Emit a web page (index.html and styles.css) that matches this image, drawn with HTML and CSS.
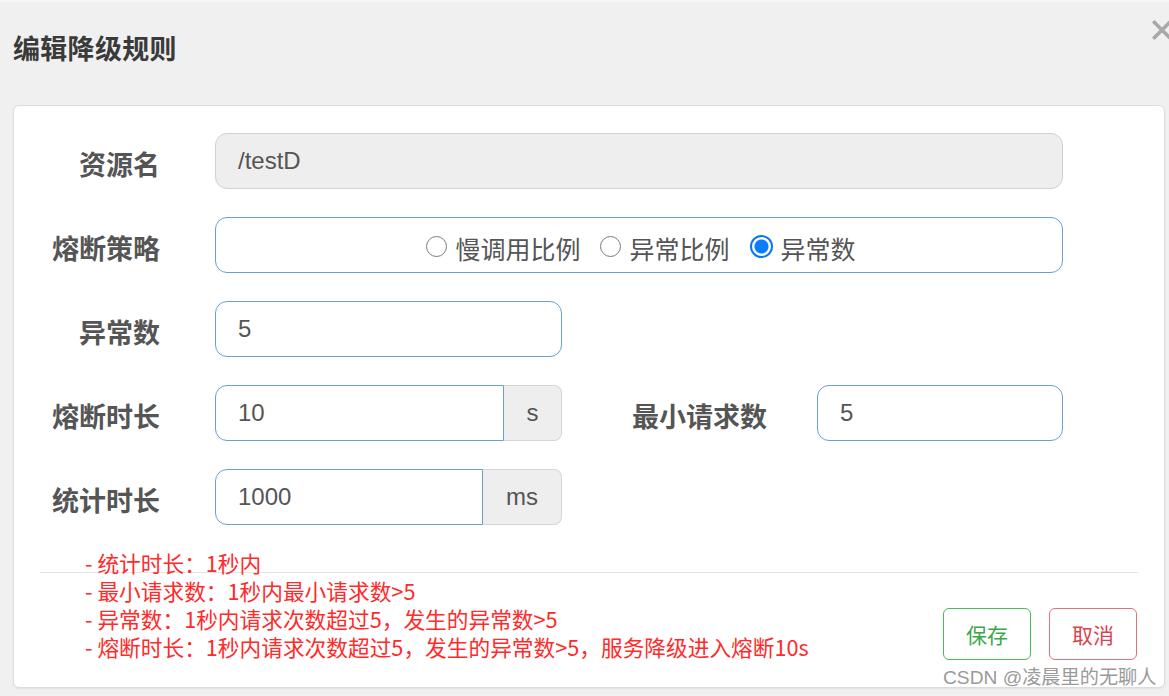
FILE: index.html
```html
<!DOCTYPE html>
<html lang="zh-CN">
<head>
<meta charset="utf-8">
<title>编辑降级规则</title>
<link rel="stylesheet" href="styles.css">
</head>
<body>
<div class="modal">
  <div class="modal-header">
    <h4 class="modal-title">编辑降级规则</h4>
    <button class="close" type="button" aria-label="关闭">
      <svg width="20" height="20" viewBox="0 0 20 20"><path d="M2.5 2.5 L17.5 17.5 M17.5 2.5 L2.5 17.5" stroke="#a8a8a8" stroke-width="3.6" stroke-linecap="square"/></svg>
    </button>
  </div>
  <div class="card">
    <div class="form">
      <div class="row">
        <label class="lbl">资源名</label>
        <input class="ctl ctl-disabled ctl-full" type="text" value="/testD" disabled>
      </div>
      <div class="row">
        <label class="lbl">熔断策略</label>
        <div class="ctl ctl-full radios">
          <label class="radio"><input type="radio" name="grade"><span>慢调用比例</span></label>
          <label class="radio"><input type="radio" name="grade"><span>异常比例</span></label>
          <label class="radio"><input type="radio" name="grade" checked><span>异常数</span></label>
        </div>
      </div>
      <div class="row">
        <label class="lbl">异常数</label>
        <input class="ctl ctl-half" type="text" value="5">
      </div>
      <div class="row">
        <label class="lbl">熔断时长</label>
        <div class="group">
          <input class="ctl ctl-grp" type="text" value="10">
          <span class="addon addon-s">s</span>
        </div>
        <label class="lbl lbl2">最小请求数</label>
        <input class="ctl ctl-rest" type="text" value="5">
      </div>
      <div class="row">
        <label class="lbl">统计时长</label>
        <div class="group">
          <input class="ctl ctl-grp" type="text" value="1000">
          <span class="addon addon-ms">ms</span>
        </div>
      </div>
    </div>
    <div class="foot">
      <div class="note">
        <div>- 统计时长：1秒内</div>
        <div>- 最小请求数：1秒内最小请求数&gt;5</div>
        <div>- 异常数：1秒内请求次数超过5，发生的异常数&gt;5</div>
        <div>- 熔断时长：1秒内请求次数超过5，发生的异常数&gt;5，服务降级进入熔断10s</div>
      </div>
      <div class="btns">
        <button class="btn btn-save" type="button">保存</button>
        <button class="btn btn-cancel" type="button">取消</button>
      </div>
    </div>
  </div>
  <div class="watermark">CSDN @凌晨里的无聊人</div>
</div>
</body>
</html>
```

FILE: styles.css
```css
* { box-sizing: border-box; }

html, body {
  margin: 0;
  padding: 0;
  height: 100%;
  overflow: hidden;
}

body {
  background: #f0f0f0;
  font-family: "Liberation Sans", "Noto Sans CJK SC", sans-serif;
  color: #555;
}

.modal {
  position: relative;
  height: 100%;
  border-top: 2px solid #f7f7f7;
}

.modal-header {
  display: flex;
  justify-content: space-between;
  align-items: flex-start;
  padding: 28px 0 0 13px;
}

.modal-title {
  margin: 0;
  font-family: "Noto Sans CJK SC", sans-serif;
  font-size: 27px;
  line-height: 36px;
  font-weight: 700;
  color: #3a3a3a;
  letter-spacing: 0.3px;
}

.close {
  border: 0;
  background: none;
  padding: 0;
  margin: -10px -3px 0 0;
  width: 20px;
  height: 20px;
  display: block;
}

.close svg { display: block; }

.card {
  margin: 39px 4px 0 13px;
  background: #fff;
  border: 1px solid #dcdcdc;
  border-radius: 6px;
  box-shadow: 0 1px 2px rgba(0,0,0,0.06);
  padding: 27px 0 26px 0;
}

.form {
  display: flex;
  flex-direction: column;
  gap: 28px;
  padding-right: 101px;
}

.row {
  display: flex;
  align-items: center;
  height: 56px;
}

.lbl {
  width: 146px;
  flex: none;
  margin-right: 55px;
  text-align: right;
  font-family: "Noto Sans CJK SC", sans-serif;
  font-size: 27px;
  font-weight: 700;
  color: #555;
  padding-top: 5px;
  line-height: 1;
}

.lbl2 {
  width: 205px;
  margin-right: 50px;
}

.ctl {
  height: 56px;
  border: 1px solid #6a9fd2;
  border-radius: 12px;
  background: #fff;
  font-family: "Liberation Sans", "Noto Sans CJK SC", sans-serif;
  font-size: 24px;
  color: #555;
  padding: 0 22px;
  outline: none;
  margin: 0;
}

.ctl-full { flex: 1; }
.ctl-half { width: 347px; flex: none; }
.ctl-rest { flex: 1; min-width: 0; }

.ctl-disabled {
  background: #eee;
  border-color: #d0d0d0;
  color: #555;
  -webkit-text-fill-color: #555;
  opacity: 1;
}

.group {
  display: flex;
  width: 347px;
  flex: none;
  height: 56px;
}

.ctl-grp {
  flex: 1;
  min-width: 0;
  border-radius: 12px 0 0 12px;
}

.addon {
  display: flex;
  align-items: center;
  justify-content: center;
  background: #eee;
  border: 1px solid #d6d6d6;
  border-left: 0;
  border-radius: 0 8px 8px 0;
  font-size: 24px;
  color: #555;
}

.addon-s { width: 58px; }
.addon-ms { width: 79px; }

.radios {
  display: flex;
  align-items: center;
  justify-content: center;
  gap: 20px;
  padding: 0 0 0 4px;
}

.radio {
  display: flex;
  align-items: center;
  gap: 8px;
  font-family: "Noto Sans CJK SC", sans-serif;
  font-size: 25px;
  color: #555;
}

.radio span { padding-top: 6px; line-height: 1; }

.radio input {
  -webkit-appearance: none;
  appearance: none;
  margin: 2px 0 0 0;
  width: 21px;
  height: 21px;
  border: 1.5px solid #7a7a7a;
  border-radius: 50%;
  background: #fff;
}

.radio input:checked {
  width: 23px;
  height: 23px;
  border: 2px solid #0a75f0;
  background: radial-gradient(circle, #0a7cff 0 6.5px, #fff 7.5px);
}

.foot {
  margin: 47px 26px 0 26px;
  border-top: 1px solid #e4e4e4;
  padding-top: 35px;
  display: flex;
  justify-content: space-between;
  align-items: flex-start;
}

.note {
  margin: -59px 0 0 45px;
  font-family: "Noto Sans CJK SC", sans-serif;
  font-size: 21.7px;
  line-height: 28px;
  color: #ff2a2a;
}

.btns {
  display: flex;
  gap: 18px;
  margin-right: 1px;
}

.btn {
  width: 88px;
  height: 52px;
  background: #fff;
  border-radius: 6px;
  font-family: "Noto Sans CJK SC", sans-serif;
  font-size: 21px;
  padding: 0;
}

.btn-save {
  border: 1.5px solid #4cb85a;
  color: #3aa84a;
}

.btn-cancel {
  border: 1.5px solid #e0707a;
  color: #d9434f;
}

.watermark {
  position: absolute;
  left: 943px;
  top: 661px;
  font-family: "Liberation Sans", "Noto Sans CJK SC", sans-serif;
  font-size: 19.2px;
  line-height: 30px;
  color: #9a9a9a;
  white-space: nowrap;
  text-shadow: 0 0 2px #fff;
}
```
